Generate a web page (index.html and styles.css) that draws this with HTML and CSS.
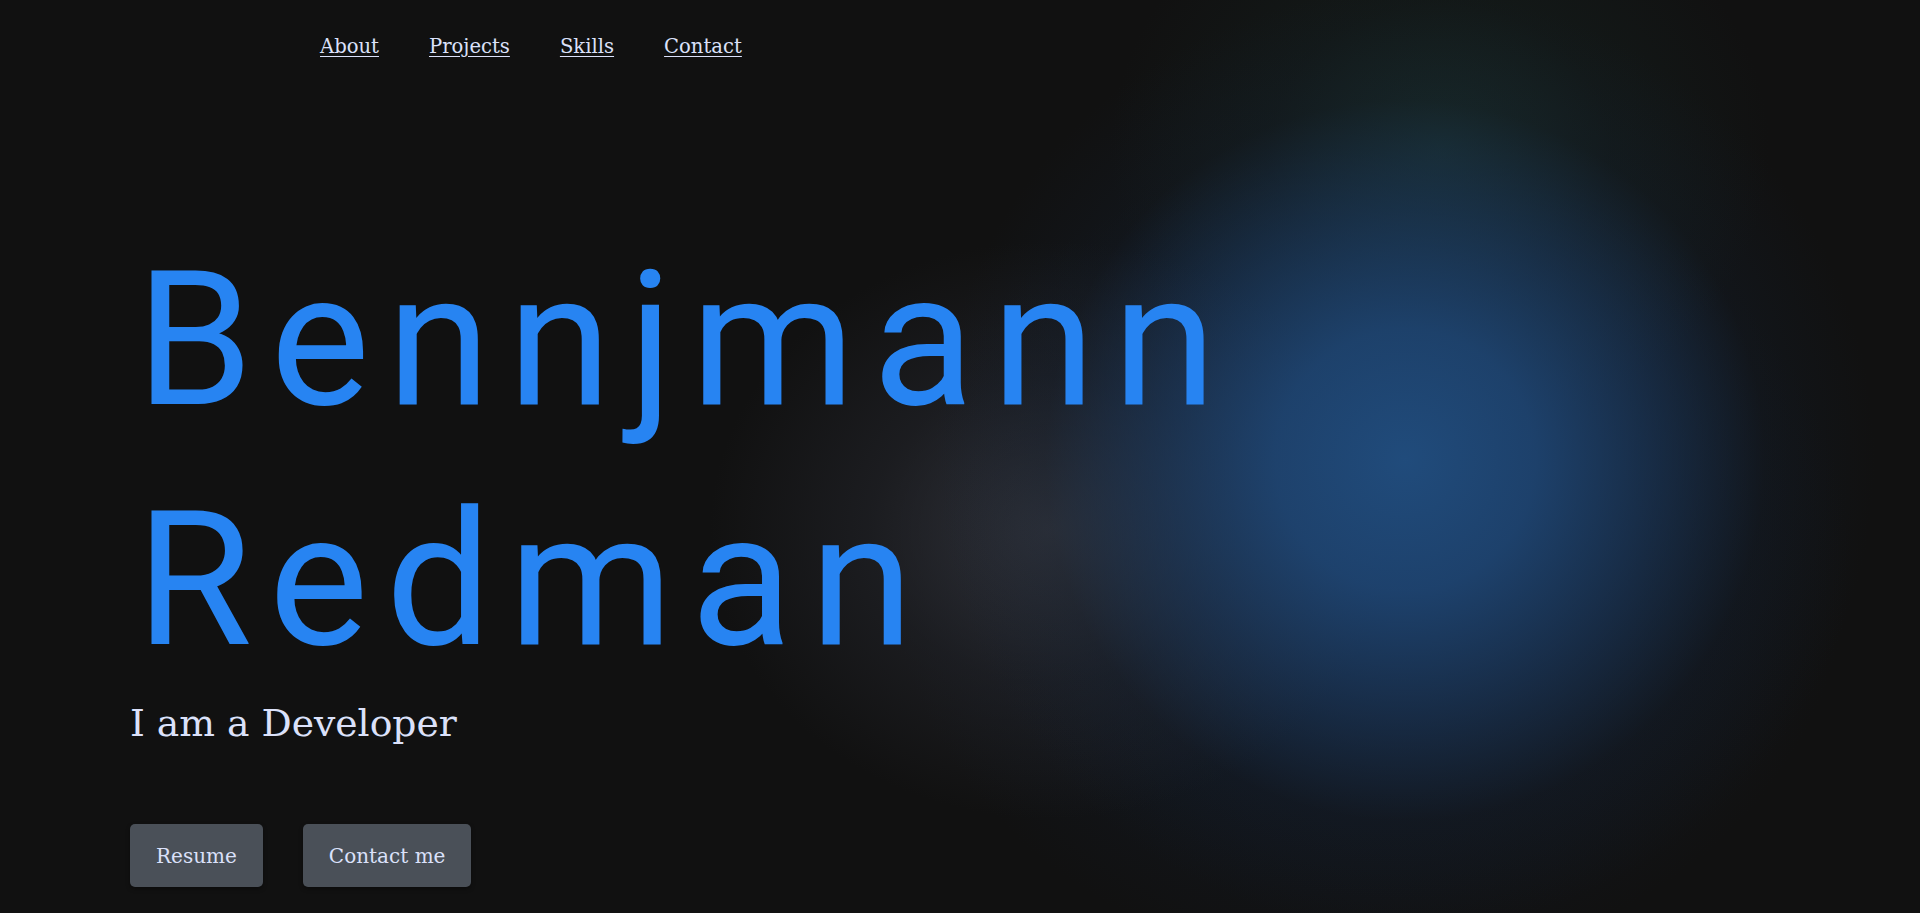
FILE: index.html
```html
<!DOCTYPE html>
<html lang="en">
<head>
<meta charset="utf-8">
<title>Bennjmann Redman</title>
<link rel="stylesheet" href="styles.css">
</head>
<body>
<div class="page">
  <nav class="nav">
    <a href="#about">About</a>
    <a href="#projects">Projects</a>
    <a href="#skills">Skills</a>
    <a href="#contact">Contact</a>
  </nav>
  <main class="hero">
    <h1 class="name">Bennjmann<br>Redman</h1>
    <p class="tagline">I am a Developer</p>
    <div class="actions">
      <a class="btn" href="#resume">Resume</a>
      <a class="btn" href="#contact">Contact me</a>
    </div>
  </main>
</div>
</body>
</html>
```

FILE: styles.css
```css
html, body {
  margin: 0;
  padding: 0;
  background: #111111;
}

body {
  font-family: "DejaVu Serif", "Liberation Serif", serif;
  color: #dbe1fa;
  overflow: hidden;
}

.page {
  min-height: 913px;
  box-sizing: border-box;
  background:
    radial-gradient(circle at 1405px 460px, rgba(33, 78, 128, 0.95) 0px, rgba(31, 72, 120, 0.85) 130px, rgba(27, 58, 96, 0.6) 250px, rgba(20, 34, 52, 0.25) 360px, rgba(17, 17, 17, 0) 470px),
    radial-gradient(ellipse 400px 340px at 1050px 530px, rgba(52, 54, 62, 0.85) 0px, rgba(40, 42, 50, 0.45) 180px, rgba(17, 17, 17, 0) 340px),
    radial-gradient(ellipse 380px 330px at 1440px 150px, rgba(26, 50, 46, 0.75) 0px, rgba(22, 38, 36, 0.35) 170px, rgba(17, 17, 17, 0) 330px),
    radial-gradient(ellipse 560px 480px at 1370px 560px, rgba(20, 30, 48, 0.9) 0px, rgba(18, 24, 34, 0.5) 330px, rgba(17, 17, 17, 0) 480px),
    #111111;
}

.nav {
  display: flex;
  gap: 50px;
  padding: 32px 0 0 320px;
  font-size: 19.6px;
  line-height: 30px;
}

.nav a {
  color: #dbe1fa;
  text-decoration: underline;
  text-underline-offset: 3px;
  text-decoration-thickness: 1px;
}

.hero {
  display: flex;
  flex-direction: column;
  align-items: flex-start;
  padding: 0 0 0 130px;
  margin-top: 158px;
}

.name {
  margin: 0;
  padding-left: 6px;
  font-family: "Roboto", "Liberation Sans", sans-serif;
  font-weight: 400;
  font-size: 188px;
  line-height: 240px;
  letter-spacing: 17px;
  color: #2784f2;
}

.tagline {
  margin: 0;
  font-size: 37.7px;
  line-height: 47px;
  color: #dbe1fa;
}

.actions {
  display: flex;
  gap: 40px;
  margin-top: 77px;
}

.btn {
  display: inline-flex;
  align-items: center;
  justify-content: center;
  height: 63px;
  padding: 0 26px;
  box-sizing: border-box;
  background: #4a5058;
  border-radius: 5px;
  color: #dbe1fa;
  text-decoration: none;
  font-size: 20px;
  box-shadow: 0 2px 4px rgba(0, 0, 0, 0.35);
}
```
